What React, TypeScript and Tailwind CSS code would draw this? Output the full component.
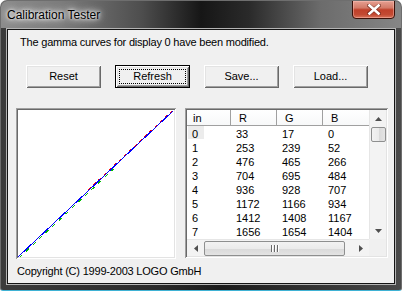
import React from "react";

const rows: [number, number, number, number][] = [
  [0, 33, 17, 0],
  [1, 253, 239, 52],
  [2, 476, 465, 266],
  [3, 704, 695, 484],
  [4, 936, 928, 707],
  [5, 1172, 1166, 934],
  [6, 1412, 1408, 1167],
  [7, 1656, 1654, 1404],
];

function Btn({ label, def }: { label: string; def?: boolean }) {
  if (def) {
    return (
      <div className="w-[75px] h-[23px] border border-[#000] bg-[#f0f0f0] shadow-[inset_1px_1px_0_#fff,inset_-1px_-1px_0_#696969,inset_2px_2px_0_#e3e3e3,inset_-2px_-2px_0_#a0a0a0] p-[3px] flex">
        <div className="flex-1 border border-dotted border-black flex items-center justify-center leading-[13px]">
          {label}
        </div>
      </div>
    );
  }
  return (
    <div className="w-[75px] h-[23px] bg-[#f0f0f0] shadow-[inset_1px_1px_0_#fff,inset_-1px_-1px_0_#696969,inset_2px_2px_0_#e3e3e3,inset_-2px_-2px_0_#a0a0a0] flex items-center justify-center leading-[13px]">
      {label}
    </div>
  );
}

function Graph() {
  return (
    <div className="w-[160px] h-[151px] p-[2px] bg-white shadow-[inset_1px_1px_0_#a0a0a0,inset_-1px_-1px_0_#fff,inset_2px_2px_0_#696969,inset_-2px_-2px_0_#e3e3e3]">
      <svg width="156" height="147" viewBox="0 0 156 147" shapeRendering="crispEdges">
        <line x1="70.5" y1="79.6" x2="155.5" y2="-0.5" stroke="#ff0000" strokeWidth="1" strokeDasharray="3 4" />
        <line x1="1.5" y1="147.5" x2="95.5" y2="59" stroke="#00c000" strokeWidth="1" strokeDasharray="4 5" />
        <line x1="0.5" y1="146.5" x2="155.5" y2="0.5" stroke="#0000ff" strokeWidth="1" />
      </svg>
    </div>
  );
}

function ArrowUp() {
  return (
    <svg width="7" height="4" viewBox="0 0 7 4">
      <path d="M0 4 L3.5 0 L7 4Z" fill="#4f4f4f" />
    </svg>
  );
}
function ArrowDown() {
  return (
    <svg width="7" height="4" viewBox="0 0 7 4">
      <path d="M0 0 L3.5 4 L7 0Z" fill="#4f4f4f" />
    </svg>
  );
}
function ArrowLeft() {
  return (
    <svg width="4" height="7" viewBox="0 0 4 7">
      <path d="M4 0 L0 3.5 L4 7Z" fill="#4f4f4f" />
    </svg>
  );
}
function ArrowRight() {
  return (
    <svg width="4" height="7" viewBox="0 0 4 7">
      <path d="M0 0 L4 3.5 L0 7Z" fill="#4f4f4f" />
    </svg>
  );
}

function ListView() {
  const cols = ["w-[44px]", "w-[46px]", "w-[46px]", "w-[46px]"];
  const heads = ["in", "R", "G", "B"];
  return (
    <div className="w-[203px] h-[150px] p-[2px] bg-white shadow-[inset_1px_1px_0_#a0a0a0,inset_-1px_-1px_0_#fff,inset_2px_2px_0_#696969,inset_-2px_-2px_0_#e3e3e3] flex flex-col">
      <div className="flex h-[129px]">
        <div className="w-[182px] flex flex-col">
          <div className="flex h-[16px] border-b border-[#a0a0a0] bg-[linear-gradient(180deg,#ffffff,#f7f8f9)]">
            {heads.map((h, i) => (
              <div
                key={h}
                className={`${cols[i]} ${i < 3 ? "border-r border-[#a0a0a0]" : ""} ${i === 0 ? "pl-[6px]" : "pl-[8px]"} pt-[2px] leading-[13px]`}
              >
                {h}
              </div>
            ))}
          </div>
          {rows.map((r) => (
            <div key={r[0]} className="flex h-[14px]">
              {r.map((v, i) => (
                <div key={i} className={`${cols[i]} ${i === 0 ? "pl-[1px]" : "pl-[5px]"} leading-[12px] pt-[2px]`}>
                  {i === 0 ? (
                    <span className={`inline-block w-[16px] h-[13px] -mt-[2px] pt-[2px] pl-[4px] ${r[0] === 0 ? "bg-[#ececec]" : ""}`}>{v}</span>
                  ) : (
                    v
                  )}
                </div>
              ))}
            </div>
          ))}
        </div>
        <div className="w-[17px] bg-[#f3f3f3] border-l border-[#e6e6e6] flex flex-col items-center">
          <div className="h-[17px] w-full flex items-center justify-center">
            <ArrowUp />
          </div>
          <div className="w-[15px] h-[15px] rounded-[2px] border border-[#8e8f8f] bg-[linear-gradient(90deg,#f2f2f2,#ebebeb_50%,#d9d9d9_51%,#e4e4e4)]" />
          <div className="flex-1" />
          <div className="h-[17px] w-full flex items-center justify-center">
            <ArrowDown />
          </div>
        </div>
      </div>
      <div className="flex h-[17px]">
        <div className="w-[182px] bg-[#f3f3f3] border-t border-[#e6e6e6] flex items-center">
          <div className="w-[17px] h-full flex items-center justify-center">
            <ArrowLeft />
          </div>
          <div className="w-[141px] h-[15px] rounded-[2px] border border-[#8e8f8f] bg-[linear-gradient(180deg,#f2f2f2,#ebebeb_50%,#d9d9d9_51%,#e4e4e4)] flex items-center justify-center gap-[1px]">
            <div className="w-[1px] h-[7px] bg-[#6a6a6a] shadow-[1px_0_0_#fff]" />
            <div className="w-[1px] h-[7px] ml-[1px] bg-[#6a6a6a] shadow-[1px_0_0_#fff]" />
            <div className="w-[1px] h-[7px] ml-[1px] bg-[#6a6a6a] shadow-[1px_0_0_#fff]" />
          </div>
          <div className="flex-1" />
          <div className="w-[17px] h-full flex items-center justify-center">
            <ArrowRight />
          </div>
        </div>
        <div className="w-[17px] bg-[#f0f0f0]" />
      </div>
    </div>
  );
}

export default function App() {
  return (
    <div className="w-[402px] h-[291px] flex flex-col rounded-t-[7px] rounded-b-[3px] overflow-hidden border border-[#6e6e6e] border-b-[#3fb2d4] bg-[linear-gradient(90deg,#3c3c3c,#2a2a2a_40%,#1c1c1c_55%,#3a3a3a_85%,#4a4a4a)] font-['Liberation_Sans',Arial,sans-serif]">
      <div className="h-[27px] flex items-start justify-between bg-[linear-gradient(90deg,#8c8c8c_0%,#7c7c7c_15%,#4e4e4e_35%,#161616_50%,#2a2a2a_62%,#6c6c6c_80%,#868686_100%)]">
        <div className="pl-[6px] pt-[6px] text-[12px] leading-[16px] text-black [text-shadow:0_0_6px_#fff,0_0_10px_#fff,0_0_3px_#fff]">
          Calibration Tester
        </div>
        <div className="mr-[6px] -mt-[1px] w-[43px] h-[19px] rounded-b-[4px] border border-[#3a1008] bg-[linear-gradient(180deg,#e6a092_0%,#d37a68_40%,#c0402a_52%,#c34a33_80%,#d8735a_100%)] shadow-[inset_0_0_0_1px_rgba(255,200,190,0.45)] flex items-center justify-center">
          <svg width="14" height="11" viewBox="0 0 14 11">
            <path d="M2 1.5 L12 9.5 M12 1.5 L2 9.5" stroke="#5a1d12" strokeWidth="4" strokeLinecap="round" opacity="0.6" />
            <path d="M2.5 1.5 L11.5 9.5 M11.5 1.5 L2.5 9.5" stroke="#fff" strokeWidth="2.6" strokeLinecap="square" />
          </svg>
        </div>
      </div>
      <div className="flex-1 px-[5px] pb-[5px] flex flex-col">
        <div className="flex-1 border border-[#b4b4b4] flex flex-col">
          <div className="flex-1 border border-[#141414] flex flex-col">
            <div className="w-[386px] h-[253px] bg-[#f0f0f0] flex flex-col text-[11px] text-black">
              <p className="pl-[12px] pt-[6px] leading-[13px] tracking-[-0.2px]">
                The gamma curves for display 0 have been modified.
              </p>
              <div className="flex gap-[14px] pl-[18px] mt-[16px]">
                <Btn label="Reset" />
                <Btn label="Refresh" def />
                <Btn label="Save..." />
                <Btn label="Load..." />
              </div>
              <div className="flex mt-[20px] pl-[8px] gap-[9px] items-start">
                <Graph />
                <ListView />
              </div>
              <p className="pl-[9px] mt-[6px] leading-[13px] tracking-[-0.2px]">
                Copyright (C) 1999-2003 LOGO GmbH
              </p>
            </div>
          </div>
        </div>
      </div>
    </div>
  );
}
